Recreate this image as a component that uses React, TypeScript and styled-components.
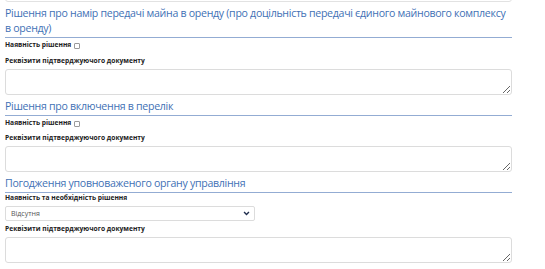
import React from "react";
import { styled, createGlobalStyle } from "styled-components";

const GlobalStyle = createGlobalStyle`
  html, body {
    margin: 0;
    padding: 0;
    background: #ffffff;
    overflow: hidden;
  }
  body {
    font-family: "Open Sans", "Liberation Sans", sans-serif;
  }
`;

const App = () => {
  return (
    <>
      <GlobalStyle />
      <Page>
        <PrevArea />
        <Section>
          <SectionTitle>
            Рішення про намір передачі майна в оренду (про доцільність передачі єдиного майнового комплексу в оренду)
          </SectionTitle>
          <CheckRow>
            <FieldLabel>Наявність рішення</FieldLabel>
            <Check type="checkbox" />
          </CheckRow>
          <FieldLabel>Реквізити підтверджуючого документу</FieldLabel>
          <Area />
        </Section>
        <Section>
          <SectionTitle>Рішення про включення в перелік</SectionTitle>
          <CheckRow $tight>
            <FieldLabel>Наявність рішення</FieldLabel>
            <Check type="checkbox" />
          </CheckRow>
          <FieldLabel>Реквізити підтверджуючого документу</FieldLabel>
          <Area />
        </Section>
        <Section>
          <SectionTitle>Погодження уповноваженого органу управління</SectionTitle>
          <FieldLabel>Наявність та необхідність рішення</FieldLabel>
          <SelectWrap>
            <Select defaultValue="none">
              <option value="none">Відсутня</option>
            </Select>
            <Chevron viewBox="0 0 10 10">
              <path d="M1.5 3 L5 6.5 L8.5 3" fill="none" stroke="#1f2d4d" strokeWidth="2" />
            </Chevron>
          </SelectWrap>
          <FieldLabel>Реквізити підтверджуючого документу</FieldLabel>
          <Area />
        </Section>
      </Page>
    </>
  );
};

export default App;

const Page = styled.div`
  width: 507px;
  padding-left: 5px;
  display: flex;
  flex-direction: column;
`;

const PrevArea = styled.div`
  height: 28px;
  margin-top: -26px;
  border: 1px solid #e2e2e2;
  border-radius: 3px;
  box-sizing: border-box;
`;

const Section = styled.div`
  display: flex;
  flex-direction: column;
`;

const SectionTitle = styled.div`
  margin-top: 4px;
  font-size: 10.6px;
  letter-spacing: -0.3px;
  line-height: 15px;
  color: #3f71b5;
  padding-bottom: 1px;
  border-bottom: 1px solid #93acd3;
`;

const CheckRow = styled.div<{ $tight?: boolean }>`
  display: flex;
  align-items: center;
  gap: 2px;
  margin-top: 2px;
  margin-bottom: ${(p) => (p.$tight ? "5px" : "6px")};
`;

const FieldLabel = styled.label`
  display: block;
  font-size: 6.7px;
  line-height: 10px;
  font-weight: 700;
  color: #222;
  margin-bottom: 3px;
  ${CheckRow} & {
    margin-bottom: 0;
  }
`;

const Check = styled.input`
  appearance: none;
  width: 6px;
  height: 6px;
  margin: 2px 0 0 1px;
  border: 1px solid #9a9a9a;
  border-radius: 1px;
  background: #fff;
`;

const Area = styled.textarea`
  display: block;
  box-sizing: border-box;
  width: 100%;
  height: 26px;
  border: 1px solid #dcdcdc;
  border-radius: 3px;
  font-family: inherit;
  resize: vertical;
  outline: none;
`;

const SelectWrap = styled.div`
  position: relative;
  width: 250px;
  height: 15px;
  margin-bottom: 3px;
`;

const Select = styled.select`
  display: block;
  appearance: none;
  box-sizing: border-box;
  width: 100%;
  height: 100%;
  margin: 0;
  border: 1px solid #dcdcdc;
  border-radius: 2px;
  background: #fff;
  padding: 0 0 0 5px;
  font-family: inherit;
  font-size: 7px;
  color: #555;
  outline: none;
`;

const Chevron = styled.svg`
  position: absolute;
  right: 5px;
  top: 4px;
  width: 7px;
  height: 7px;
  pointer-events: none;
`;
